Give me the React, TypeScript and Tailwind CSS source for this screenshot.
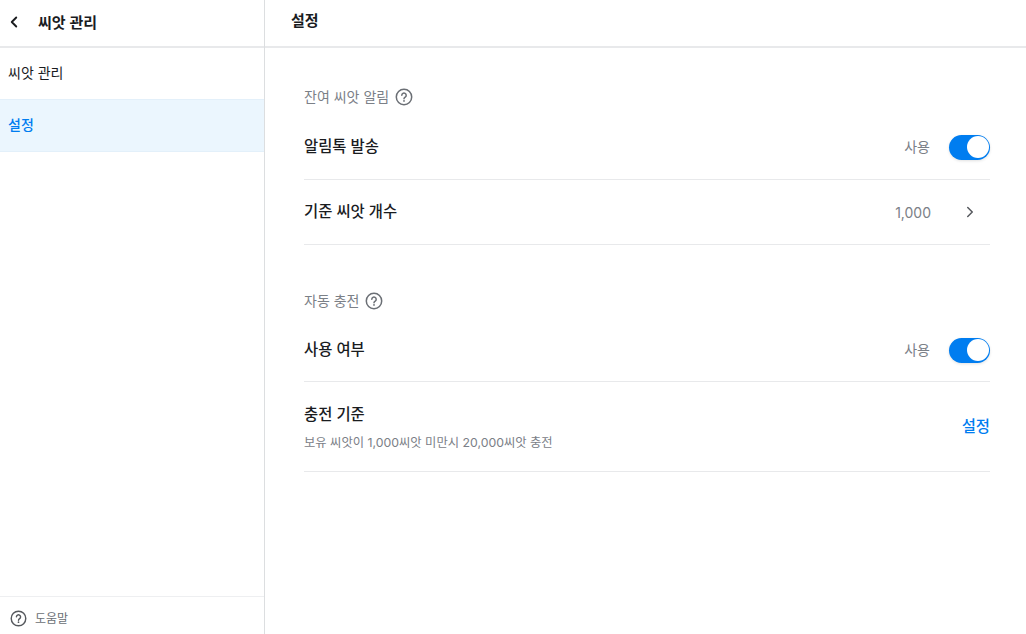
import { ChevronLeft, ChevronRight } from "lucide-react";

function HelpIcon({ className }: { className?: string }) {
  return (
    <svg viewBox="0 0 18 18" fill="none" className={className}>
      <circle cx="9" cy="9" r="7.7" stroke="currentColor" strokeWidth="1.5" />
      <path d="M6.8 7.2a2.2 2.2 0 1 1 3.4 1.9c-.8.5-1.2.9-1.2 1.7" stroke="currentColor" strokeWidth="1.5" strokeLinecap="round" />
      <circle cx="9" cy="12.9" r="0.9" fill="currentColor" />
    </svg>
  );
}

function Toggle() {
  return (
    <div className="flex h-[25px] w-[41px] items-center justify-end rounded-full bg-[#007df0] pr-[1.5px] shadow-[0_1px_3px_rgba(0,0,0,0.12)]">
      <div className="h-[22px] w-[22px] rounded-full bg-white" />
    </div>
  );
}

function SectionLabel({ label }: { label: string }) {
  return (
    <div className="flex h-[18px] items-center gap-[6px] text-sm text-[#7b8087]">
      <span>{label}</span>
      <HelpIcon className="h-[18px] w-[18px] text-[#6b6f75]" />
    </div>
  );
}

function ToggleRow({ label, h }: { label: string; h: string }) {
  return (
    <div className={`flex items-center justify-between border-b border-[#e8e9eb] ${h}`}>
      <span className="text-[15.4px] font-medium text-[#1a1c1f]">{label}</span>
      <div className="flex items-center gap-[19px]">
        <span className="text-sm text-[#7b8087]">사용</span>
        <Toggle />
      </div>
    </div>
  );
}

export default function App() {
  return (
    <div className="flex h-[634px] w-[1026px] overflow-hidden bg-white font-['Inter','Noto_Sans_CJK_KR',sans-serif] text-[#1a1c1f]">
      <aside className="flex w-[265px] shrink-0 flex-col border-r border-[#dcdee0]">
        <div className="flex h-[48px] shrink-0 items-center border-b-2 border-[#e8e9eb] pl-[5px]">
          <ChevronLeft className="mb-[2px] h-[18px] w-[18px]" strokeWidth={2.5} />
          <span className="ml-[15px] text-[15px] font-semibold">씨앗 관리</span>
        </div>
        <div className="flex h-[51px] items-center pb-[2px] pl-2 text-sm">씨앗 관리</div>
        <div className="flex h-[53px] items-center border-y border-[#e3f0fa] bg-[#ebf6fe] pb-[2px] pl-2 text-sm font-medium text-[#007df0]">설정</div>
        <div className="mt-auto flex h-[38px] items-center gap-2 border-t border-[#eeeff1] pl-[10px] text-xs text-[#6b6f75]">
          <HelpIcon className="mt-[6px] h-[17px] w-[17px] text-[#55585d]" />
          <span className="mt-[7px]">도움말</span>
        </div>
      </aside>
      <main className="flex min-w-0 flex-1 flex-col">
        <div className="flex h-[48px] shrink-0 items-center border-b-2 border-[#e8e9eb] pb-[3px] pl-[26px] text-[15px] font-semibold">설정</div>
        <div className="pl-[39px] pr-[36px] pt-[40px]">
          <SectionLabel label="잔여 씨앗 알림" />
          <div className="mt-[9px]">
            <ToggleRow label="알림톡 발송" h="h-[65px]" />
            <div className="flex h-[65px] items-center justify-between border-b border-[#e8e9eb]">
              <span className="text-[15.4px] font-medium">기준 씨앗 개수</span>
              <div className="flex items-center gap-[30px] pr-[11px]">
                <span className="pt-[2px] text-sm text-[#7b8087]">1,000</span>
                <ChevronRight className="h-[18px] w-[18px] text-[#55585d]" strokeWidth={2} />
              </div>
            </div>
          </div>
          <div className="mt-[47px]">
            <SectionLabel label="자동 충전" />
          </div>
          <div className="mt-[9px]">
            <ToggleRow label="사용 여부" h="h-[63px]" />
            <div className="flex h-[90px] items-center justify-between border-b border-[#e8e9eb]">
              <div className="flex flex-col gap-[8px] pt-[2px]">
                <span className="text-[15.4px] font-medium">충전 기준</span>
                <span className="text-[12.3px] text-[#7b8087]">보유 씨앗이 1,000씨앗 미만시 20,000씨앗 충전</span>
              </div>
              <span className="text-[15.4px] font-medium text-[#007df0]">설정</span>
            </div>
          </div>
        </div>
      </main>
    </div>
  );
}
